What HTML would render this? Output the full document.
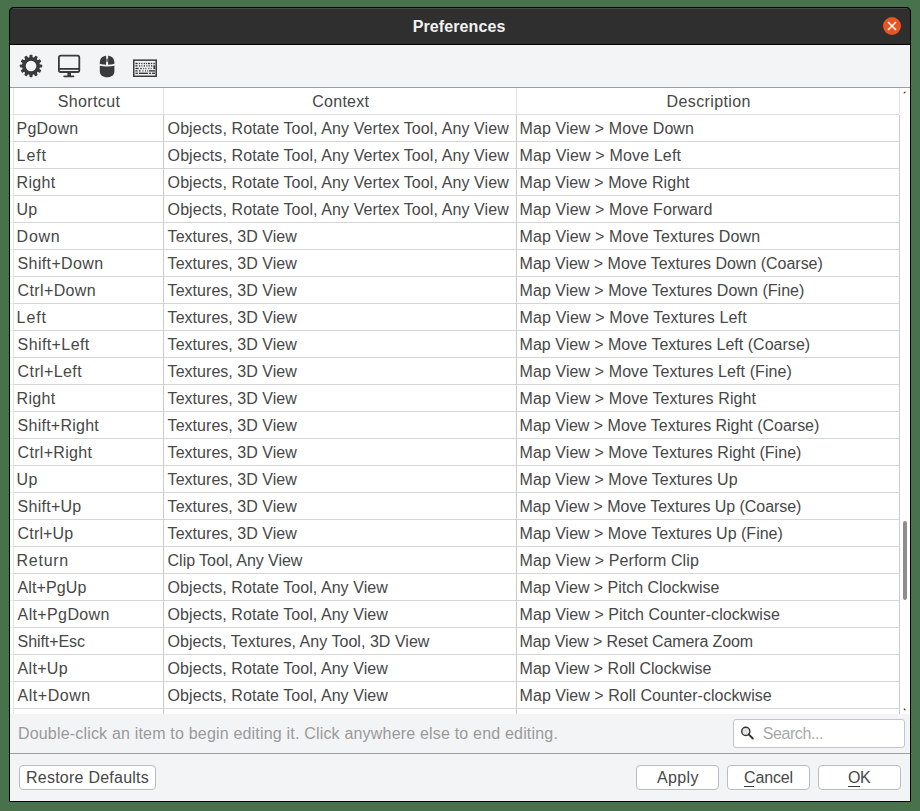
<!DOCTYPE html>
<html><head><meta charset="utf-8"><style>
html,body{margin:0;padding:0;width:920px;height:811px;overflow:hidden;background:#48724c;}
.t{position:absolute;font-family:"Liberation Sans",sans-serif;font-size:16px;line-height:18px;height:18px;white-space:nowrap;}
.win{position:absolute;left:9px;top:7px;width:900px;height:793px;border:1px solid #000;border-radius:5px 5px 0 0;background:#f3f4f6;overflow:hidden;}
.title{position:absolute;left:9px;top:7px;width:902px;height:37px;background:#313031;border-radius:6px 6px 0 0;box-shadow:inset 0 1px 0 #4a494a, inset 1px 0 0 #000, inset -1px 0 0 #000, inset 0 1px 0 #000;}
.abs{position:absolute;}
.hl{position:absolute;left:10px;width:889px;height:1px;background:#d4d4d4;}
.vl{position:absolute;top:88px;width:1px;height:626px;background:#d0d0d0;}
.ic{position:absolute;}
.btn{position:absolute;top:765px;height:23px;border:1px solid #b9bcc2;border-radius:4px;background:#fff;}
</style></head><body>
<div class="win"></div>
<div class="abs" style="left:9px;top:7px;width:902px;height:38px;background:#000;border-radius:5px 5px 0 0;"></div>
<div class="abs" style="left:10px;top:8px;width:900px;height:36px;background:#302f30;border-radius:4px 4px 0 0;"></div>
<div class="abs" style="left:13px;top:8px;width:894px;height:1px;background:#484748;"></div>
<div class="abs" style="left:883px;top:17px;width:18px;height:18px;border-radius:50%;background:#e95420;"></div>
<svg class="abs" style="left:883px;top:17px" width="18" height="18" viewBox="0 0 18 18"><path d="M5 5 L13 13 M13 5 L5 13" stroke="#fff" stroke-width="1.5"/></svg>
<div class="abs" style="left:10px;top:45px;width:900px;height:42px;background:#f3f4f6;"></div>
<div class="abs" style="left:10px;top:87px;width:900px;height:1px;background:#9d9d9d;"></div>
<div class="abs" style="left:10px;top:88px;width:900px;height:626px;background:#fff;"></div>
<div class="abs" style="left:13px;top:114px;width:886px;height:1px;background:#dedede"></div><div class="abs" style="left:10px;top:114px;width:3px;height:1px;background:#eeeeee"></div><div class="abs" style="left:14px;top:141px;width:885px;height:1px;background:#d5d5d5"></div><div class="abs" style="left:10px;top:141px;width:3px;height:1px;background:#ececec"></div><div class="abs" style="left:14px;top:168px;width:885px;height:1px;background:#d5d5d5"></div><div class="abs" style="left:10px;top:168px;width:3px;height:1px;background:#ececec"></div><div class="abs" style="left:14px;top:195px;width:885px;height:1px;background:#d5d5d5"></div><div class="abs" style="left:10px;top:195px;width:3px;height:1px;background:#ececec"></div><div class="abs" style="left:14px;top:222px;width:885px;height:1px;background:#d5d5d5"></div><div class="abs" style="left:10px;top:222px;width:3px;height:1px;background:#ececec"></div><div class="abs" style="left:14px;top:249px;width:885px;height:1px;background:#d5d5d5"></div><div class="abs" style="left:10px;top:249px;width:3px;height:1px;background:#ececec"></div><div class="abs" style="left:14px;top:276px;width:885px;height:1px;background:#d5d5d5"></div><div class="abs" style="left:10px;top:276px;width:3px;height:1px;background:#ececec"></div><div class="abs" style="left:14px;top:303px;width:885px;height:1px;background:#d5d5d5"></div><div class="abs" style="left:10px;top:303px;width:3px;height:1px;background:#ececec"></div><div class="abs" style="left:14px;top:330px;width:885px;height:1px;background:#d5d5d5"></div><div class="abs" style="left:10px;top:330px;width:3px;height:1px;background:#ececec"></div><div class="abs" style="left:14px;top:357px;width:885px;height:1px;background:#d5d5d5"></div><div class="abs" style="left:10px;top:357px;width:3px;height:1px;background:#ececec"></div><div class="abs" style="left:14px;top:384px;width:885px;height:1px;background:#d5d5d5"></div><div class="abs" style="left:10px;top:384px;width:3px;height:1px;background:#ececec"></div><div class="abs" style="left:14px;top:411px;width:885px;height:1px;background:#d5d5d5"></div><div class="abs" style="left:10px;top:411px;width:3px;height:1px;background:#ececec"></div><div class="abs" style="left:14px;top:438px;width:885px;height:1px;background:#d5d5d5"></div><div class="abs" style="left:10px;top:438px;width:3px;height:1px;background:#ececec"></div><div class="abs" style="left:14px;top:465px;width:885px;height:1px;background:#d5d5d5"></div><div class="abs" style="left:10px;top:465px;width:3px;height:1px;background:#ececec"></div><div class="abs" style="left:14px;top:492px;width:885px;height:1px;background:#d5d5d5"></div><div class="abs" style="left:10px;top:492px;width:3px;height:1px;background:#ececec"></div><div class="abs" style="left:14px;top:519px;width:885px;height:1px;background:#d5d5d5"></div><div class="abs" style="left:10px;top:519px;width:3px;height:1px;background:#ececec"></div><div class="abs" style="left:14px;top:546px;width:885px;height:1px;background:#d5d5d5"></div><div class="abs" style="left:10px;top:546px;width:3px;height:1px;background:#ececec"></div><div class="abs" style="left:14px;top:573px;width:885px;height:1px;background:#d5d5d5"></div><div class="abs" style="left:10px;top:573px;width:3px;height:1px;background:#ececec"></div><div class="abs" style="left:14px;top:600px;width:885px;height:1px;background:#d5d5d5"></div><div class="abs" style="left:10px;top:600px;width:3px;height:1px;background:#ececec"></div><div class="abs" style="left:14px;top:627px;width:885px;height:1px;background:#d5d5d5"></div><div class="abs" style="left:10px;top:627px;width:3px;height:1px;background:#ececec"></div><div class="abs" style="left:14px;top:654px;width:885px;height:1px;background:#d5d5d5"></div><div class="abs" style="left:10px;top:654px;width:3px;height:1px;background:#ececec"></div><div class="abs" style="left:14px;top:681px;width:885px;height:1px;background:#d5d5d5"></div><div class="abs" style="left:10px;top:681px;width:3px;height:1px;background:#ececec"></div><div class="abs" style="left:14px;top:708px;width:885px;height:1px;background:#d5d5d5"></div><div class="abs" style="left:10px;top:708px;width:3px;height:1px;background:#ececec"></div>
<div class="abs" style="left:13px;top:88px;width:1px;height:626px;background:#e4e4e4"></div><div class="abs" style="left:163px;top:88px;width:1px;height:26px;background:#e3e3e3"></div><div class="abs" style="left:163px;top:115px;width:1px;height:599px;background:#cbcbcb"></div><div class="abs" style="left:516px;top:88px;width:1px;height:26px;background:#e3e3e3"></div><div class="abs" style="left:516px;top:115px;width:1px;height:599px;background:#cbcbcb"></div><div class="abs" style="left:899px;top:88px;width:1px;height:26px;background:#e3e3e3"></div><div class="abs" style="left:899px;top:115px;width:1px;height:599px;background:#cbcbcb"></div><svg class="abs" style="left:903px;top:91px" width="4" height="4" viewBox="0 0 4 4"><path d="M0.8 0.8 H3.4 L0.8 3 Z" fill="#4a4a4a"/></svg><svg class="abs" style="left:903px;top:707px" width="4" height="4" viewBox="0 0 4 4"><path d="M0.8 0.8 L3.2 3.2 H0.8 Z" fill="#4a4a4a"/></svg>
<div class="abs" style="left:903px;top:521px;width:4px;height:79px;border-radius:2px;background:#8e8e8e;"></div>
<div class="abs" style="left:10px;top:753px;width:900px;height:1px;background:#9d9d9d;"></div>
<div class="abs" style="left:733px;top:719px;width:170px;height:27px;border:1px solid #c2c5ca;border-radius:3px;background:#fff;"></div>
<svg style="position:absolute;left:739px;top:725px" width="16" height="16" viewBox="0 0 16 16"><circle cx="6.8" cy="6.4" r="4.1" fill="#e4e4e4" stroke="#333" stroke-width="1.4"/><line x1="9.7" y1="9.3" x2="13.8" y2="13.5" stroke="#333" stroke-width="1.9" stroke-linecap="round"/></svg>
<div class="btn" style="left:19px;width:135px"></div>
<div class="btn" style="left:636px;width:81px"></div>
<div class="btn" style="left:727px;width:81px"></div>
<div class="btn" style="left:818px;width:81px"></div>
<div class="abs" style="left:744px;top:786px;width:10px;height:1px;background:#3c3c3c"></div>
<div class="abs" style="left:848px;top:786px;width:12px;height:1px;background:#3c3c3c"></div>
<svg class="ic" style="left:19px;top:54px" width="24" height="24" viewBox="0 0 24 24"><g fill="#3a3a3a"><circle cx="12" cy="12" r="9"/><rect x="10.45" y="0.8" width="3.1" height="4" rx="1" transform="rotate(0 12 12)"/><rect x="10.45" y="0.8" width="3.1" height="4" rx="1" transform="rotate(30 12 12)"/><rect x="10.45" y="0.8" width="3.1" height="4" rx="1" transform="rotate(60 12 12)"/><rect x="10.45" y="0.8" width="3.1" height="4" rx="1" transform="rotate(90 12 12)"/><rect x="10.45" y="0.8" width="3.1" height="4" rx="1" transform="rotate(120 12 12)"/><rect x="10.45" y="0.8" width="3.1" height="4" rx="1" transform="rotate(150 12 12)"/><rect x="10.45" y="0.8" width="3.1" height="4" rx="1" transform="rotate(180 12 12)"/><rect x="10.45" y="0.8" width="3.1" height="4" rx="1" transform="rotate(210 12 12)"/><rect x="10.45" y="0.8" width="3.1" height="4" rx="1" transform="rotate(240 12 12)"/><rect x="10.45" y="0.8" width="3.1" height="4" rx="1" transform="rotate(270 12 12)"/><rect x="10.45" y="0.8" width="3.1" height="4" rx="1" transform="rotate(300 12 12)"/><rect x="10.45" y="0.8" width="3.1" height="4" rx="1" transform="rotate(330 12 12)"/></g><circle cx="12" cy="12" r="5.3" fill="#f3f4f6"/></svg><svg class="ic" style="left:56px;top:53px" width="26" height="26" viewBox="0 0 26 26"><g fill="none" stroke="#3a3a3a" stroke-width="1.8"><rect x="2.9" y="2.6" width="20.4" height="16.4" rx="1.8"/><line x1="2.9" y1="15.9" x2="23.3" y2="15.9"/></g><rect x="11.4" y="19" width="3.6" height="4" fill="#3a3a3a"/><rect x="7.3" y="22.6" width="11.1" height="1.7" rx="0.8" fill="#3a3a3a"/></svg><svg class="ic" style="left:97px;top:53px" width="20" height="26" viewBox="0 0 20 26"><path d="M2.8 10 C2.8 5.2 5.6 2.8 10.1 2.8 C14.6 2.8 17.4 5.2 17.4 10 V18.3 C17.4 22 14.6 24.3 10.1 24.3 C5.6 24.3 2.8 22 2.8 18.3 Z" fill="#3a3a3a"/><path d="M2 11.6 Q10.1 13.6 18.2 11.6" fill="none" stroke="#f3f4f6" stroke-width="1.7"/><rect x="9.1" y="2" width="2" height="10.5" fill="#f3f4f6"/><rect x="9.3" y="5.6" width="1.6" height="3.2" fill="#59606a"/></svg><svg class="ic" style="left:132px;top:58px" width="26" height="20" viewBox="0 0 26 20"><rect x="1.75" y="2.15" width="22.5" height="16.1" fill="none" stroke="#3a3a3a" stroke-width="1.5"/><g fill="#3a3a3a"><rect x="3.4" y="4.8" width="2.4" height="1.4"/><rect x="6.9" y="4.8" width="1.2" height="1.4"/><rect x="9.1" y="4.8" width="1.2" height="1.4"/><rect x="11.7" y="4.8" width="1.3" height="1.4"/><rect x="13.9" y="4.8" width="1.3" height="1.4"/><rect x="16" y="4.8" width="2.1" height="1.4"/><rect x="18.9" y="4.8" width="1.3" height="1.4"/><rect x="21.3" y="4.8" width="1.6" height="1.4"/><rect x="3.4" y="7.2" width="2.1" height="1.4"/><rect x="6.9" y="7.2" width="1.3" height="1.4"/><rect x="9.4" y="7.2" width="1.0" height="1.4"/><rect x="11.7" y="7.2" width="1.3" height="1.4"/><rect x="14.3" y="7.2" width="1.0" height="1.4"/><rect x="16.4" y="7.2" width="1.3" height="1.4"/><rect x="19.0" y="7.2" width="1.3" height="1.4"/><rect x="21.4" y="7.2" width="1.8" height="4.0"/><rect x="3.4" y="9.8" width="3.3" height="1.4"/><rect x="8.2" y="9.8" width="1.6" height="1.4"/><rect x="11.2" y="9.8" width="1.0" height="1.4"/><rect x="13.4" y="9.8" width="1.0" height="1.4"/><rect x="16.4" y="9.8" width="1.0" height="1.4"/><rect x="18.6" y="9.8" width="1.0" height="1.4"/><rect x="3.4" y="12.2" width="2.1" height="1.4"/><rect x="6.9" y="12.2" width="1.6" height="1.4"/><rect x="10.4" y="12.2" width="1.0" height="1.4"/><rect x="13.0" y="12.2" width="1.0" height="1.4"/><rect x="15.2" y="12.2" width="1.0" height="1.4"/><rect x="17.0" y="12.2" width="6.1" height="1.4"/><rect x="3.4" y="14.6" width="2.4" height="1.4"/><rect x="6.9" y="14.6" width="9.0" height="1.4"/><rect x="17.1" y="14.6" width="2.0" height="1.4"/><rect x="20.0" y="14.6" width="3.1" height="1.4"/></g></svg>
<div class="t" style="left:16.60px;top:119.50px;color:#474747;letter-spacing:0.204px;">PgDown</div><div class="t" style="left:167.60px;top:119.50px;color:#474747;letter-spacing:0.087px;">Objects, Rotate Tool, Any Vertex Tool, Any View</div><div class="t" style="left:519.60px;top:119.50px;color:#474747;letter-spacing:0.086px;">Map View &gt; Move Down</div><div class="t" style="left:16.60px;top:146.50px;color:#474747;letter-spacing:0.886px;">Left</div><div class="t" style="left:167.60px;top:146.50px;color:#474747;letter-spacing:0.087px;">Objects, Rotate Tool, Any Vertex Tool, Any View</div><div class="t" style="left:519.60px;top:146.50px;color:#474747;letter-spacing:0.152px;">Map View &gt; Move Left</div><div class="t" style="left:16.60px;top:173.50px;color:#474747;letter-spacing:0.323px;">Right</div><div class="t" style="left:167.60px;top:173.50px;color:#474747;letter-spacing:0.087px;">Objects, Rotate Tool, Any Vertex Tool, Any View</div><div class="t" style="left:519.60px;top:173.50px;color:#474747;letter-spacing:0.041px;">Map View &gt; Move Right</div><div class="t" style="left:16.60px;top:200.50px;color:#474747;letter-spacing:0.145px;">Up</div><div class="t" style="left:167.60px;top:200.50px;color:#474747;letter-spacing:0.087px;">Objects, Rotate Tool, Any Vertex Tool, Any View</div><div class="t" style="left:519.60px;top:200.50px;color:#474747;letter-spacing:0.107px;">Map View &gt; Move Forward</div><div class="t" style="left:16.60px;top:227.50px;color:#474747;letter-spacing:0.731px;">Down</div><div class="t" style="left:167.60px;top:227.50px;color:#474747;letter-spacing:0.038px;">Textures, 3D View</div><div class="t" style="left:519.60px;top:227.50px;color:#474747;letter-spacing:0.115px;">Map View &gt; Move Textures Down</div><div class="t" style="left:17.60px;top:254.50px;color:#474747;letter-spacing:0.359px;">Shift+Down</div><div class="t" style="left:167.60px;top:254.50px;color:#474747;letter-spacing:0.038px;">Textures, 3D View</div><div class="t" style="left:519.60px;top:254.50px;color:#474747;letter-spacing:-0.020px;">Map View &gt; Move Textures Down (Coarse)</div><div class="t" style="left:17.60px;top:281.50px;color:#474747;letter-spacing:0.371px;">Ctrl+Down</div><div class="t" style="left:167.60px;top:281.50px;color:#474747;letter-spacing:0.038px;">Textures, 3D View</div><div class="t" style="left:519.60px;top:281.50px;color:#474747;letter-spacing:0.035px;">Map View &gt; Move Textures Down (Fine)</div><div class="t" style="left:16.60px;top:308.50px;color:#474747;letter-spacing:0.886px;">Left</div><div class="t" style="left:167.60px;top:308.50px;color:#474747;letter-spacing:0.038px;">Textures, 3D View</div><div class="t" style="left:519.60px;top:308.50px;color:#474747;letter-spacing:0.142px;">Map View &gt; Move Textures Left</div><div class="t" style="left:17.60px;top:335.50px;color:#474747;letter-spacing:0.400px;">Shift+Left</div><div class="t" style="left:167.60px;top:335.50px;color:#474747;letter-spacing:0.038px;">Textures, 3D View</div><div class="t" style="left:519.60px;top:335.50px;color:#474747;letter-spacing:0.021px;">Map View &gt; Move Textures Left (Coarse)</div><div class="t" style="left:17.60px;top:362.50px;color:#474747;letter-spacing:0.391px;">Ctrl+Left</div><div class="t" style="left:167.60px;top:362.50px;color:#474747;letter-spacing:0.038px;">Textures, 3D View</div><div class="t" style="left:519.60px;top:362.50px;color:#474747;letter-spacing:0.084px;">Map View &gt; Move Textures Left (Fine)</div><div class="t" style="left:16.60px;top:389.50px;color:#474747;letter-spacing:0.298px;">Right</div><div class="t" style="left:167.60px;top:389.50px;color:#474747;letter-spacing:0.038px;">Textures, 3D View</div><div class="t" style="left:519.60px;top:389.50px;color:#474747;letter-spacing:0.090px;">Map View &gt; Move Textures Right</div><div class="t" style="left:17.60px;top:416.50px;color:#474747;letter-spacing:0.243px;">Shift+Right</div><div class="t" style="left:167.60px;top:416.50px;color:#474747;letter-spacing:0.038px;">Textures, 3D View</div><div class="t" style="left:519.60px;top:416.50px;color:#474747;letter-spacing:-0.018px;">Map View &gt; Move Textures Right (Coarse)</div><div class="t" style="left:17.60px;top:443.50px;color:#474747;letter-spacing:0.307px;">Ctrl+Right</div><div class="t" style="left:167.60px;top:443.50px;color:#474747;letter-spacing:0.038px;">Textures, 3D View</div><div class="t" style="left:519.60px;top:443.50px;color:#474747;letter-spacing:0.052px;">Map View &gt; Move Textures Right (Fine)</div><div class="t" style="left:16.60px;top:470.50px;color:#474747;letter-spacing:0.345px;">Up</div><div class="t" style="left:167.60px;top:470.50px;color:#474747;letter-spacing:0.038px;">Textures, 3D View</div><div class="t" style="left:519.60px;top:470.50px;color:#474747;letter-spacing:0.045px;">Map View &gt; Move Textures Up</div><div class="t" style="left:17.60px;top:497.50px;color:#474747;letter-spacing:0.255px;">Shift+Up</div><div class="t" style="left:167.60px;top:497.50px;color:#474747;letter-spacing:0.038px;">Textures, 3D View</div><div class="t" style="left:519.60px;top:497.50px;color:#474747;letter-spacing:-0.048px;">Map View &gt; Move Textures Up (Coarse)</div><div class="t" style="left:17.60px;top:524.50px;color:#474747;letter-spacing:0.153px;">Ctrl+Up</div><div class="t" style="left:167.60px;top:524.50px;color:#474747;letter-spacing:0.038px;">Textures, 3D View</div><div class="t" style="left:519.60px;top:524.50px;color:#474747;letter-spacing:0.005px;">Map View &gt; Move Textures Up (Fine)</div><div class="t" style="left:16.60px;top:551.50px;color:#474747;letter-spacing:0.715px;">Return</div><div class="t" style="left:167.60px;top:551.50px;color:#474747;letter-spacing:-0.039px;">Clip Tool, Any View</div><div class="t" style="left:519.60px;top:551.50px;color:#474747;letter-spacing:0.095px;">Map View &gt; Perform Clip</div><div class="t" style="left:17.60px;top:578.50px;color:#474747;letter-spacing:0.108px;">Alt+PgUp</div><div class="t" style="left:167.60px;top:578.50px;color:#474747;letter-spacing:0.069px;">Objects, Rotate Tool, Any View</div><div class="t" style="left:519.60px;top:578.50px;color:#474747;letter-spacing:-0.017px;">Map View &gt; Pitch Clockwise</div><div class="t" style="left:17.60px;top:605.50px;color:#474747;letter-spacing:0.367px;">Alt+PgDown</div><div class="t" style="left:167.60px;top:605.50px;color:#474747;letter-spacing:0.069px;">Objects, Rotate Tool, Any View</div><div class="t" style="left:519.60px;top:605.50px;color:#474747;letter-spacing:0.042px;">Map View &gt; Pitch Counter-clockwise</div><div class="t" style="left:17.60px;top:632.50px;color:#474747;letter-spacing:-0.091px;">Shift+Esc</div><div class="t" style="left:167.60px;top:632.50px;color:#474747;letter-spacing:0.035px;">Objects, Textures, Any Tool, 3D View</div><div class="t" style="left:519.60px;top:632.50px;color:#474747;letter-spacing:-0.117px;">Map View &gt; Reset Camera Zoom</div><div class="t" style="left:17.60px;top:659.50px;color:#474747;letter-spacing:0.306px;">Alt+Up</div><div class="t" style="left:167.60px;top:659.50px;color:#474747;letter-spacing:0.069px;">Objects, Rotate Tool, Any View</div><div class="t" style="left:519.60px;top:659.50px;color:#474747;letter-spacing:-0.018px;">Map View &gt; Roll Clockwise</div><div class="t" style="left:17.60px;top:686.50px;color:#474747;letter-spacing:0.525px;">Alt+Down</div><div class="t" style="left:167.60px;top:686.50px;color:#474747;letter-spacing:0.069px;">Objects, Rotate Tool, Any View</div><div class="t" style="left:519.60px;top:686.50px;color:#474747;letter-spacing:0.037px;">Map View &gt; Roll Counter-clockwise</div><div class="t" style="left:57.80px;top:92.50px;color:#474747;letter-spacing:0.366px;">Shortcut</div><div class="t" style="left:312.20px;top:92.50px;color:#474747;letter-spacing:0.284px;">Context</div><div class="t" style="left:666.60px;top:92.50px;color:#474747;letter-spacing:0.387px;">Description</div><div class="t" style="left:412.70px;top:17.50px;color:#f2f2f2;letter-spacing:0.108px;font-weight:bold;">Preferences</div><div class="t" style="left:17.90px;top:724.50px;color:#9a9a9a;letter-spacing:0.189px;">Double-click an item to begin editing it. Click anywhere else to end editing.</div><div class="t" style="left:762.70px;top:724.50px;color:#a8a8a8;letter-spacing:-0.411px;">Search...</div><div class="t" style="left:26.00px;top:768.50px;color:#474747;letter-spacing:0.242px;">Restore Defaults</div><div class="t" style="left:657.00px;top:768.50px;color:#474747;letter-spacing:0.369px;">Apply</div><div class="t" style="left:744.00px;top:768.50px;color:#474747;letter-spacing:-0.150px;">Cancel</div><div class="t" style="left:848.00px;top:768.50px;color:#474747;letter-spacing:-0.445px;">OK</div>
</body></html>
